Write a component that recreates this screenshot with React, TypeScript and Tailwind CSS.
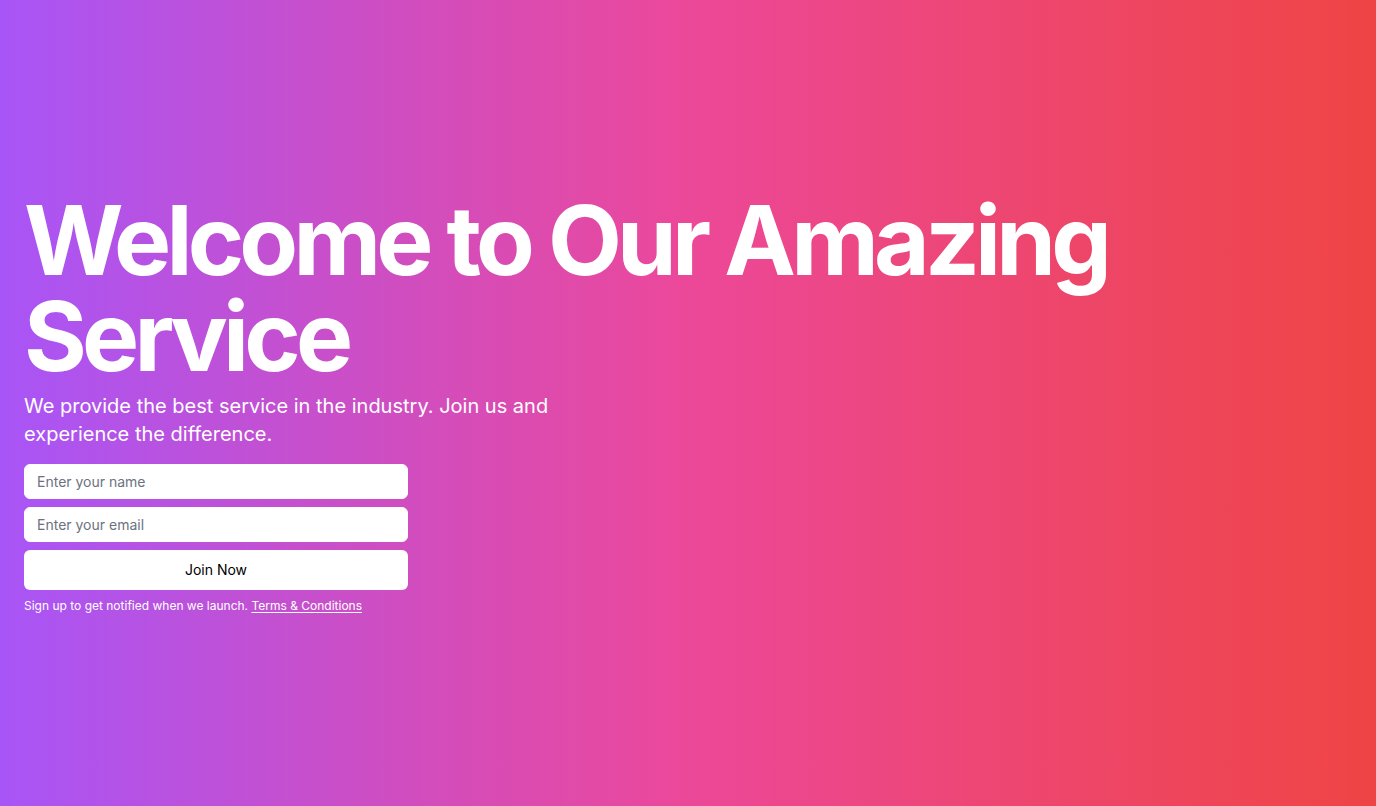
import React from "react";

const App = () => {
  return (
    <div
      className="flex min-h-screen w-full items-center bg-linear-to-r/srgb from-[#a855f7] via-[#ec4899] to-[#ef4444] px-6"
      style={{ fontFamily: "Inter, 'Noto Sans', sans-serif" }}
    >
      <div className="flex flex-col gap-4">
        <div className="space-y-2">
          <h1 className="text-8xl font-bold leading-none tracking-tighter text-white">
            Welcome to Our Amazing Service
          </h1>
          <p className="max-w-[600px] text-xl text-white">
            We provide the best service in the industry. Join us and experience the difference.
          </p>
        </div>
        <div className="w-full max-w-sm space-y-2">
          <form className="flex flex-col gap-2">
            <input
              type="text"
              placeholder="Enter your name"
              className="h-[35px] w-full rounded-md border border-white bg-white px-3 text-sm text-gray-900 placeholder:text-[#6b7280] focus:outline-none"
            />
            <input
              type="email"
              placeholder="Enter your email"
              className="h-[35px] w-full rounded-md border border-white bg-white px-3 text-sm text-gray-900 placeholder:text-[#6b7280] focus:outline-none"
            />
            <button
              type="submit"
              className="h-10 w-full rounded-md bg-white text-sm font-normal text-black"
            >
              Join Now
            </button>
          </form>
          <p className="text-xs text-white">
            Sign up to get notified when we launch.{" "}
            <a href="#" className="underline underline-offset-2">
              Terms &amp; Conditions
            </a>
          </p>
        </div>
      </div>
    </div>
  );
};

export default App;
